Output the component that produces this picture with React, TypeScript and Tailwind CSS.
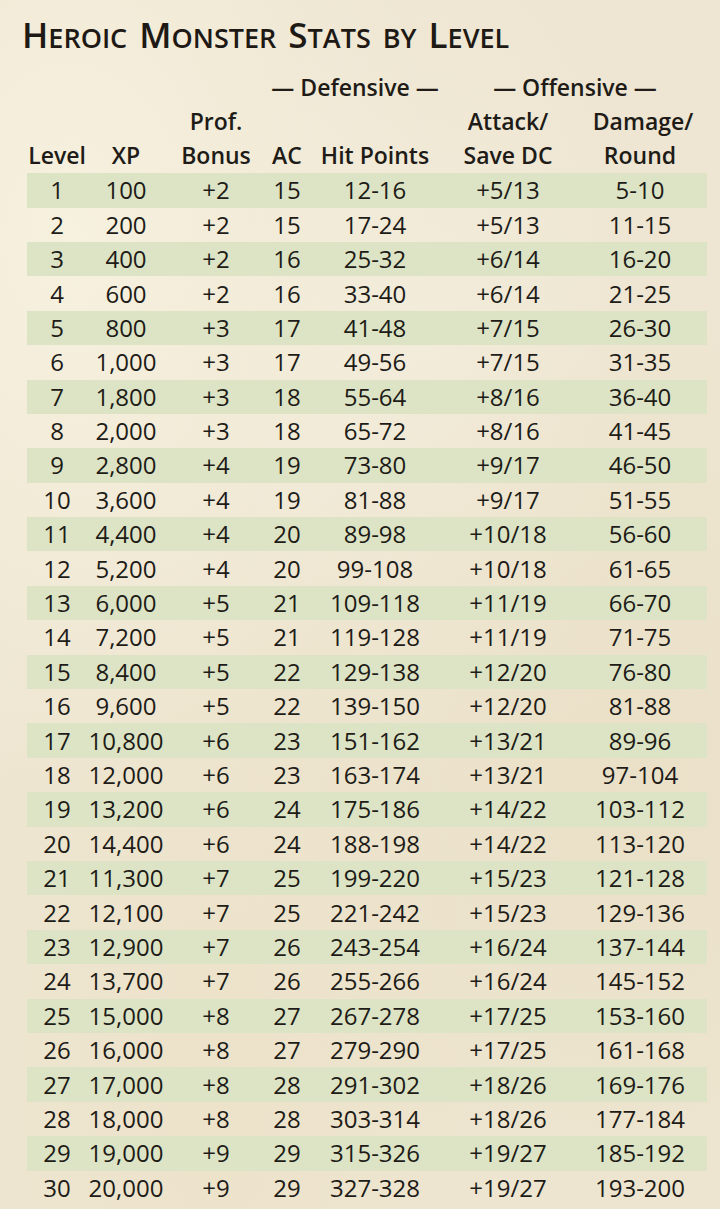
import React from "react";

const rows: [string, string, string, string, string, string, string][] = [
  ["1", "100", "+2", "15", "12-16", "+5/13", "5-10"],
  ["2", "200", "+2", "15", "17-24", "+5/13", "11-15"],
  ["3", "400", "+2", "16", "25-32", "+6/14", "16-20"],
  ["4", "600", "+2", "16", "33-40", "+6/14", "21-25"],
  ["5", "800", "+3", "17", "41-48", "+7/15", "26-30"],
  ["6", "1,000", "+3", "17", "49-56", "+7/15", "31-35"],
  ["7", "1,800", "+3", "18", "55-64", "+8/16", "36-40"],
  ["8", "2,000", "+3", "18", "65-72", "+8/16", "41-45"],
  ["9", "2,800", "+4", "19", "73-80", "+9/17", "46-50"],
  ["10", "3,600", "+4", "19", "81-88", "+9/17", "51-55"],
  ["11", "4,400", "+4", "20", "89-98", "+10/18", "56-60"],
  ["12", "5,200", "+4", "20", "99-108", "+10/18", "61-65"],
  ["13", "6,000", "+5", "21", "109-118", "+11/19", "66-70"],
  ["14", "7,200", "+5", "21", "119-128", "+11/19", "71-75"],
  ["15", "8,400", "+5", "22", "129-138", "+12/20", "76-80"],
  ["16", "9,600", "+5", "22", "139-150", "+12/20", "81-88"],
  ["17", "10,800", "+6", "23", "151-162", "+13/21", "89-96"],
  ["18", "12,000", "+6", "23", "163-174", "+13/21", "97-104"],
  ["19", "13,200", "+6", "24", "175-186", "+14/22", "103-112"],
  ["20", "14,400", "+6", "24", "188-198", "+14/22", "113-120"],
  ["21", "11,300", "+7", "25", "199-220", "+15/23", "121-128"],
  ["22", "12,100", "+7", "25", "221-242", "+15/23", "129-136"],
  ["23", "12,900", "+7", "26", "243-254", "+16/24", "137-144"],
  ["24", "13,700", "+7", "26", "255-266", "+16/24", "145-152"],
  ["25", "15,000", "+8", "27", "267-278", "+17/25", "153-160"],
  ["26", "16,000", "+8", "27", "279-290", "+17/25", "161-168"],
  ["27", "17,000", "+8", "28", "291-302", "+18/26", "169-176"],
  ["28", "18,000", "+8", "28", "303-314", "+18/26", "177-184"],
  ["29", "19,000", "+9", "29", "315-326", "+19/27", "185-192"],
  ["30", "20,000", "+9", "29", "327-328", "+19/27", "193-200"],
];

const cols = "grid grid-cols-[60px_78px_102px_40px_136px_130px_134px]";

const titleWords: [string, string][] = [
  ["H", "EROIC"],
  ["M", "ONSTER"],
  ["S", "TATS"],
  ["", "BY"],
  ["L", "EVEL"],
];

export default function App() {
  return (
    <div
      className="w-[720px] h-[1209px] overflow-hidden bg-[#eee6d2] text-[#201b17]"
      style={{
        fontFamily: '"Open Sans", "Noto Sans", sans-serif',
        backgroundImage:
          "radial-gradient(ellipse at 10% 20%, rgba(250,245,228,0.7), transparent 40%), radial-gradient(ellipse at 85% 65%, rgba(232,220,192,0.6), transparent 45%), radial-gradient(ellipse at 30% 88%, rgba(236,224,196,0.6), transparent 40%), radial-gradient(ellipse at 60% 30%, rgba(246,240,224,0.6), transparent 35%)",
      }}
    >
      <div className="h-[70px] pl-[22px] pt-[13px]">
        <h1 className="flex gap-[12px] items-baseline font-semibold leading-[44px] text-[#1e1915]">
          {titleWords.map(([cap, rest], i) => (
            <span key={i}>
              {cap && <span className="text-[35px]">{cap}</span>}
              <span className="text-[27px]">{rest}</span>
            </span>
          ))}
        </h1>
      </div>
      <div className="pl-[27px] -mt-[3px]">
        <div className={`${cols} h-[37.4px] pt-[3px] items-center text-[23px] font-semibold leading-none`}>
          <div className="col-span-3" />
          <div className="col-span-2 text-center">— Defensive —</div>
          <div className="col-span-2 text-center">— Offensive —</div>
        </div>
        <div className={`${cols} h-[34.4px] items-center text-[23px] font-semibold leading-none`}>
          <div />
          <div />
          <div className="text-center">Prof.</div>
          <div />
          <div />
          <div className="text-center">Attack/</div>
          <div className="text-center pl-[6px]">Damage/</div>
        </div>
        <div className={`${cols} h-[34.4px] items-center text-[23px] font-semibold leading-none`}>
          <div className="text-center">Level</div>
          <div className="text-center">XP</div>
          <div className="text-center">Bonus</div>
          <div className="text-center">AC</div>
          <div className="text-center">Hit Points</div>
          <div className="text-center">Save DC</div>
          <div className="text-center">Round</div>
        </div>
        {rows.map((r, i) => (
          <div
            key={r[0]}
            className={`${cols} h-[34.4px] items-center text-[24px] font-medium leading-none ${
              i % 2 === 0 ? "bg-[#dde4c5]" : ""
            } w-[680px]`}
          >
            {r.map((c, j) => (
              <div key={j} className="text-center">
                {c}
              </div>
            ))}
          </div>
        ))}
      </div>
    </div>
  );
}
